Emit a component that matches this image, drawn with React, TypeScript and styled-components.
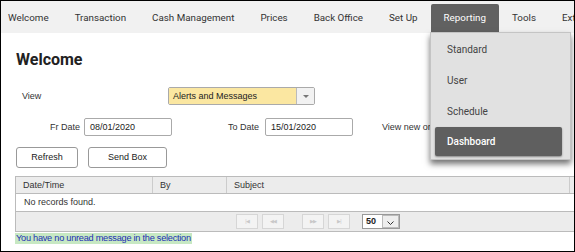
import React from 'react';
import styled, { createGlobalStyle } from 'styled-components';

const GlobalStyle = createGlobalStyle`
  html, body { margin: 0; padding: 0; background: #fff; }
  * { box-sizing: border-box; }
`;

const navItems = ['Welcome', 'Transaction', 'Cash Management', 'Prices', 'Back Office', 'Set Up', 'Reporting', 'Tools', 'Extras'];
const menuItems = ['Standard', 'User', 'Schedule', 'Dashboard'];

const Frame = styled.div`
  position: relative;
  width: 575px;
  height: 252px;
  border: 1px solid #000;
  overflow: hidden;
  font-family: 'Liberation Sans', Arial, sans-serif;
`;

const NavBar = styled.nav`
  display: flex;
  align-items: center;
  height: 32px;
  background: #f1f1f1;
  white-space: nowrap;
`;

const NavItem = styled.div<{ active?: boolean }>`
  display: flex;
  align-items: center;
  height: 28px;
  padding: 0 13px;
  margin-top: 1px;
  font-family: Roboto, sans-serif;
  font-size: 9.8px;
  color: ${(p) => (p.active ? '#fff' : '#333')};
  background: ${(p) => (p.active ? '#616161' : 'transparent')};
  border-radius: 2px 2px 0 0;
  &:first-child { padding-left: 7px; }
`;

const Content = styled.div`
  padding: 0 0 0 14px;
  line-height: 1;
`;

const Title = styled.h1`
  margin: 16px 0 0 1px;
  height: 22px;
  font-family: Roboto, sans-serif;
  font-weight: 700;
  font-size: 16px;
  line-height: 22px;
  color: #222;
`;

const Row = styled.div`
  display: flex;
  align-items: center;
  height: 18px;
  font-size: 9px;
  color: #333;
  white-space: nowrap;
`;

const Label = styled.span<{ w: number; right?: boolean }>`
  width: ${(p) => p.w}px;
  flex-shrink: 0;
  text-align: ${(p) => (p.right ? 'right' : 'left')};
  padding-right: ${(p) => (p.right ? 4 : 0)}px;
`;

const Select = styled.div`
  display: flex;
  width: 147px;
  height: 18px;
  border: 1px solid #aaa;
  border-radius: 2px;
  overflow: hidden;
`;

const SelectValue = styled.div`
  flex: 1;
  display: flex;
  align-items: center;
  padding-left: 4px;
  background: #fbe7a1;
  color: #222;
`;

const SelectArrow = styled.div`
  width: 18px;
  border-left: 1px solid #bbb;
  background: #f2f2f2;
  display: flex;
  align-items: center;
  justify-content: center;
  &::after {
    content: '';
    border-left: 3px solid transparent;
    border-right: 3px solid transparent;
    border-top: 3px solid #777;
  }
`;

const Input = styled.div<{ w: number }>`
  width: ${(p) => p.w}px;
  flex-shrink: 0;
  height: 18px;
  border: 1px solid #aaa;
  border-radius: 2px;
  padding-left: 5px;
  display: flex;
  align-items: center;
  color: #222;
`;

const Buttons = styled.div`
  display: flex;
  gap: 10px;
  margin: 11px 0 0 1px;
`;

const Button = styled.div<{ w: number }>`
  width: ${(p) => p.w}px;
  height: 21px;
  border: 1px solid #999;
  border-radius: 3px;
  background: #fff;
  display: flex;
  align-items: center;
  justify-content: center;
  font-size: 9px;
  color: #222;
`;

const Table = styled.div`
  width: 580px;
  margin-top: 8px;
  border-left: 1px solid #bbb;
  font-size: 9px;
  color: #333;
`;

const HeadRow = styled.div`
  display: flex;
  height: 18px;
  background: #ececec;
  border-top: 1px solid #bbb;
  border-bottom: 1px solid #bbb;
`;

const HeadCell = styled.div<{ w: number }>`
  width: ${(p) => p.w}px;
  flex-shrink: 0;
  padding-left: 7px;
  display: flex;
  align-items: center;
  border-right: 1px solid #ccc;
`;

const BodyRow = styled.div`
  height: 18px;
  padding-left: 8px;
  display: flex;
  align-items: center;
  background: #fff;
  border-bottom: 1px solid #bbb;
`;

const Pager = styled.div`
  height: 20px;
  background: #ececec;
  border-bottom: 1px solid #bbb;
  display: flex;
  align-items: center;
  padding-left: 220px;
`;

const PageBtn = styled.div<{ gapAfter?: number }>`
  width: 22px;
  height: 15px;
  margin-right: ${(p) => p.gapAfter ?? 4}px;
  border: 1px solid #d6d6d6;
  background: #f3f3f3;
  color: #c8c8c8;
  font-size: 5px;
  letter-spacing: -1px;
  display: flex;
  align-items: center;
  justify-content: center;
`;

const PageSize = styled.div`
  display: flex;
  width: 38px;
  height: 15px;
  margin-left: 12px;
  border: 1px solid #999;
  background: #fff;
`;

const PageSizeValue = styled.div`
  flex: 1;
  padding-left: 3px;
  font-weight: 700;
  font-size: 9px;
  color: #222;
  display: flex;
  align-items: center;
`;

const PageSizeArrow = styled.div`
  width: 17px;
  border: 1px solid #bbb;
  background: #eee;
  display: flex;
  align-items: flex-end;
  justify-content: center;
  padding-bottom: 2px;
`;

const Message = styled.div`
  width: fit-content;
  margin-top: 1px;
  padding: 0 1px;
  background: #c7e8c3;
  color: #1b2fb3;
  font-family: 'Liberation Sans', Arial, sans-serif;
  font-size: 9.2px;
  line-height: 11px;
  letter-spacing: -0.25px;
`;

const Menu = styled.div`
  position: absolute;
  left: 429px;
  top: 31px;
  width: 141px;
  padding: 2px 8px 3px 4px;
  background: #e1e1e1;
  border: 1px solid #c4c4c4;
  box-shadow: 0 4px 6px rgba(0, 0, 0, 0.55);
`;

const MenuItem = styled.div<{ active?: boolean }>`
  height: 29px;
  margin-bottom: 2px;
  padding-left: 12px;
  display: flex;
  align-items: center;
  border-radius: 2px;
  font-family: Roboto, sans-serif;
  font-size: 10px;
  font-weight: ${(p) => (p.active ? 500 : 400)};
  color: ${(p) => (p.active ? '#fff' : '#444')};
  background: ${(p) => (p.active ? '#5f5f5f' : 'transparent')};
  box-shadow: ${(p) => (p.active ? '0 1px 2px rgba(0,0,0,0.4)' : 'none')};
  &:last-child { margin-bottom: 0; margin-top: -1px; }
`;

export default function App() {
  return (
    <>
      <GlobalStyle />
      <Frame>
        <NavBar>
          {navItems.map((n) => (
            <NavItem key={n} active={n === 'Reporting'}>
              {n}
            </NavItem>
          ))}
        </NavBar>
        <Content>
          <Title>Welcome</Title>
          <Row style={{ marginTop: 16 }}>
            <Label w={153} style={{ paddingLeft: 7 }}>View</Label>
            <Select>
              <SelectValue>Alerts and Messages</SelectValue>
              <SelectArrow />
            </Select>
          </Row>
          <Row style={{ marginTop: 13 }}>
            <Label w={69} right>Fr Date</Label>
            <Input w={88}>08/01/2020</Input>
            <Label w={56} />
            <Label w={37}>To Date</Label>
            <Input w={88}>15/01/2020</Input>
            <Label w={29} />
            <span>View new or unread messages</span>
          </Row>
          <Buttons>
            <Button w={62}>Refresh</Button>
            <Button w={79}>Send Box</Button>
          </Buttons>
          <Table>
            <HeadRow>
              <HeadCell w={137}>Date/Time</HeadCell>
              <HeadCell w={74}>By</HeadCell>
              <HeadCell w={343}>Subject</HeadCell>
              <HeadCell w={40} />
            </HeadRow>
            <BodyRow>No records found.</BodyRow>
            <Pager>
              <PageBtn>|◀</PageBtn>
              <PageBtn gapAfter={18}>◀◀</PageBtn>
              <PageBtn>▶▶</PageBtn>
              <PageBtn gapAfter={0}>▶|</PageBtn>
              <PageSize>
                <PageSizeValue>50</PageSizeValue>
                <PageSizeArrow>
                  <svg width="7" height="4" viewBox="0 0 7 4">
                    <path d="M0.5 0.5 L3.5 3.5 L6.5 0.5" fill="none" stroke="#333" strokeWidth="1" />
                  </svg>
                </PageSizeArrow>
              </PageSize>
            </Pager>
          </Table>
          <Message>You have no unread message in the selection</Message>
        </Content>
        <Menu>
          {menuItems.map((m) => (
            <MenuItem key={m} active={m === 'Dashboard'}>
              {m}
            </MenuItem>
          ))}
        </Menu>
      </Frame>
    </>
  );
}
